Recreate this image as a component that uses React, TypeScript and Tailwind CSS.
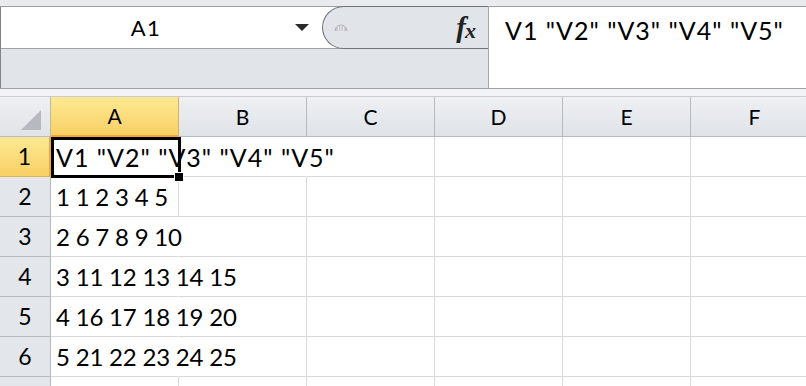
import React from "react";

const COLS = ["A", "B", "C", "D", "E", "F"];
const DATA = [
  'V1 "V2" "V3" "V4" "V5"',
  "1 1 2 3 4 5",
  "2 6 7 8 9 10",
  "3 11 12 13 14 15",
  "4 16 17 18 19 20",
  "5 21 22 23 24 25",
  "",
];

function hideRight(row: number, col: number) {
  if (row === 0 && (col === 0 || col === 1)) return true;
  if (row >= 2 && row <= 5 && col === 0) return true;
  return false;
}

export default function App() {
  return (
    <div
      className="w-[806px] h-[386px] overflow-hidden bg-white text-black"
      style={{ fontFamily: "Lato, 'Open Sans', sans-serif" }}
    >
      {/* top strip */}
      <div className="h-[7px] bg-[#e9ebee] border-b border-[#9aa0a6]" />

      {/* formula area */}
      <div className="flex h-[82px] border-b border-[#9da2a7]">
        <div className="w-[489px] flex flex-col bg-[#e1e4e8] border-l border-[#80858a] border-r border-r-[#a4a9ae]">
          <div className="h-[42px] flex bg-white border-b border-[#9da2a8]">
            <div className="w-[321px] flex items-center relative">
              <div className="flex-1 text-center text-[22px] tracking-[1.5px] pr-[4px]">A1</div>
              <svg width="14" height="8" viewBox="0 0 14 8" className="mr-[13px] mt-[1px]">
                <polygon points="0,0 14,0 7,7" fill="#2b2b2b" />
              </svg>
            </div>
            <div className="flex-1 flex items-center bg-[#e1e4e8] rounded-l-full border-l border-y border-[#6f7479] -mb-px -mt-px">
              <svg width="16" height="14" viewBox="0 0 16 14" className="ml-[10px]">
                <path d="M2 10 A6 6 0 0 1 14 10 Z" fill="#c5c8cc" />
                <path d="M2 10 A6 6 0 0 1 14 10" fill="none" stroke="#aeb2b7" strokeWidth="1" />
                <line x1="8" y1="4" x2="8" y2="10" stroke="#e8eaec" strokeWidth="1" />
                <line x1="5" y1="5" x2="6" y2="10" stroke="#e8eaec" strokeWidth="1" />
                <line x1="11" y1="5" x2="10" y2="10" stroke="#e8eaec" strokeWidth="1" />
              </svg>
              <div
                className="ml-auto mr-[12px] italic font-bold text-[#222] leading-none flex items-end"
                style={{ fontFamily: "'Liberation Serif', serif" }}
              >
                <span className="text-[29px]">f</span>
                <span className="text-[22px] -ml-[1px]">x</span>
              </div>
            </div>
          </div>
          <div className="flex-1" />
        </div>
        <div className="flex-1 bg-white pl-[16px] pt-[3px] text-[25px] tracking-[1px] leading-[40px] whitespace-nowrap">
          {DATA[0]}
        </div>
      </div>

      {/* strip */}
      <div className="h-[8px] bg-[#f2f3f5] border-b border-[#c9cdd2]" />

      {/* grid */}
      <div className="relative">
        <div className="grid grid-cols-[51px_repeat(6,128px)] auto-rows-[40px]">
          {/* corner */}
          <div className="bg-gradient-to-b from-[#eef0f3] to-[#e0e3e7] border-r border-b border-[#b5bac0] flex items-end justify-end pr-[9px] pb-[6px]">
            <svg width="20" height="20" viewBox="0 0 20 20">
              <polygon points="20,0 20,20 0,20" fill="#b6bac0" />
            </svg>
          </div>
          {COLS.map((c, i) => (
            <div
              key={c}
              className={
                i === 0
                  ? "bg-gradient-to-b from-[#fde992] to-[#f8d064] border-r border-[#e2b14f] border-b-2 border-b-[#f0a83a] flex items-center justify-center text-[21px]"
                  : "bg-gradient-to-b from-[#eef0f3] to-[#dfe3e8] border-r border-b border-[#b5bac0] flex items-center justify-center text-[21px]"
              }
            >
              {c}
            </div>
          ))}
          {DATA.map((text, r) => (
            <React.Fragment key={r}>
              <div
                className={
                  r === 0
                    ? "bg-gradient-to-b from-[#fde992] to-[#f8d064] border-r-2 border-[#f0a83a] border-b border-b-[#e2b14f] flex items-center justify-center text-[23px]"
                    : "bg-[#e3e6ea] border-r border-b border-[#b5bac0] flex items-center justify-center text-[23px]"
                }
              >
                {r < 6 ? r + 1 : ""}
              </div>
              {COLS.map((c, ci) => (
                <div
                  key={c}
                  className={
                    "border-b border-[#d6d9dc] " +
                    (hideRight(r, ci) ? "border-r border-r-transparent" : "border-r border-r-[#d6d9dc]")
                  }
                >
                  {ci === 0 && text ? (
                    <div
                      className={
                        r === 0
                          ? "relative z-10 pl-[5px] text-[25px] tracking-[1px] leading-[40px] whitespace-nowrap"
                          : "relative z-10 pl-[5px] text-[24px] tracking-[-0.2px] leading-[40px] whitespace-nowrap"
                      }
                    >
                      {text}
                    </div>
                  ) : null}
                </div>
              ))}
            </React.Fragment>
          ))}
        </div>
        {/* selection */}
        <div className="absolute left-[51px] top-[40px] w-[130px] h-[41px] border-[3px] border-black z-20 pointer-events-none" />
        <div className="absolute left-[174px] top-[75px] w-[10px] h-[10px] bg-black border border-white z-30" />
      </div>
    </div>
  );
}
